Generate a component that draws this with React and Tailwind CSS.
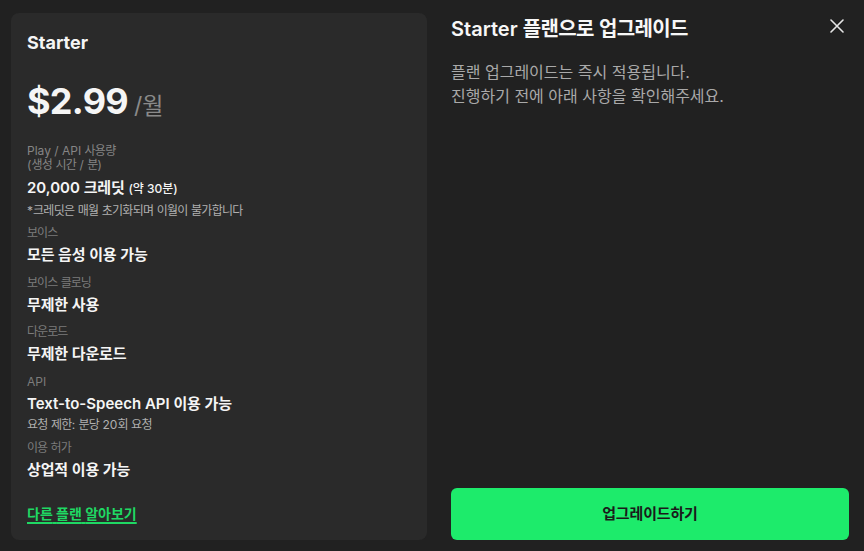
import React from "react";

function K({ children, t = "tracking-[-0.01em]" }) {
  const text = String(children);
  const parts = text.split(/([\uAC00-\uD7A3]+)/);
  return (
    <>
      {parts.map((p, i) =>
        /[\uAC00-\uD7A3]/.test(p) ? (
          <span key={i} className={t}>
            {p}
          </span>
        ) : (
          <React.Fragment key={i}>{p}</React.Fragment>
        )
      )}
    </>
  );
}

function Label({ children, className = "" }) {
  return (
    <div className={"text-[12px] leading-4 text-[#7c7c7c] " + className}>
      <K t="tracking-[-0.08em]">{children}</K>
    </div>
  );
}

function Value({ children, className = "" }) {
  return (
    <div className={"text-[15px] leading-[22px] font-semibold text-[#f5f5f5] " + className}>
      {children}
    </div>
  );
}

export default function App() {
  return (
    <div className="w-[864px] h-[551px] bg-[#212121] flex gap-[24px] pl-[11px] pt-[13px] pb-[11px] pr-[15px] font-['Inter','Noto_Sans_CJK_KR',sans-serif] overflow-hidden">
      <div className="w-[416px] shrink-0 bg-[#2a2a2a] rounded-[8px] px-[16px] pt-[16px] pb-[15px] flex flex-col">
        <div className="text-[18px] leading-[28px] font-bold text-[#f5f5f5]">Starter</div>
        <div className="mt-[24px] flex items-baseline gap-[6px] leading-[40px]">
          <span className="text-[36px] font-bold tracking-[-0.02em] text-[#f5f5f5]">$2.99</span>
          <span className="text-[23px] text-[#8a8a8a]">
            /<K t="tracking-[-0.04em]">월</K>
          </span>
        </div>

        <div className="mt-[18px] text-[12px] leading-[14px] text-[#858585]">
          <div>
            Play / API <K t="tracking-[-0.06em]">사용량</K>
          </div>
          <div>
            (<K t="tracking-[-0.06em]">생성 시간</K> / <K t="tracking-[-0.06em]">분</K>)
          </div>
        </div>
        <Value className="mt-[5px]">
          20,000 <K>크레딧</K>{" "}
          <span className="text-[12px] font-medium">
            (<K>약</K> 30<K>분</K>)
          </span>
        </Value>
        <div className="mt-[3px] text-[12px] leading-4 text-[#b0b0b0]">
          *<K t="tracking-[-0.06em]">크레딧은 매월 초기화되며 이월이 불가합니다</K>
        </div>

        <Label className="mt-[6px]">보이스</Label>
        <Value className="mt-[3px]">
          <K>모든 음성 이용 가능</K>
        </Value>

        <Label className="mt-[9px]">보이스 클로닝</Label>
        <Value className="mt-[3px]">
          <K>무제한 사용</K>
        </Value>

        <Label className="mt-[8px]">다운로드</Label>
        <Value className="mt-[3px]">
          <K>무제한 다운로드</K>
        </Value>

        <Label className="mt-[9px]">API</Label>
        <Value className="mt-[3px]">
          Text-to-Speech API <K>이용 가능</K>
        </Value>
        <div className="mt-[2px] text-[12px] leading-4 text-[#b0b0b0]">
          <K t="tracking-[-0.06em]">요청 제한</K>: <K t="tracking-[-0.06em]">분당</K> 20<K t="tracking-[-0.06em]">회 요청</K>
        </div>

        <Label className="mt-[7px]">이용 허가</Label>
        <Value className="mt-[3px]">
          <K>상업적 이용 가능</K>
        </Value>

        <div className="mt-auto">
          <a className="text-[14px] leading-5 font-bold text-[#1fd863] underline underline-offset-[3px] decoration-[2px]">
            <K t="tracking-normal">다른 플랜 알아보기</K>
          </a>
        </div>
      </div>

      <div className="flex-1 flex flex-col">
        <div className="flex items-start justify-between pt-[2px]">
          <div className="text-[20px] leading-[28px] font-semibold text-[#f7f7f7]">
            Starter <K t="tracking-[-0.03em]">플랜으로 업그레이드</K>
          </div>
          <button className="mt-[-1px] w-[24px] h-[24px] flex items-center justify-center text-[#e6e6e6]">
            <svg width="14" height="14" viewBox="0 0 14 14" fill="none" stroke="currentColor" strokeWidth="1.6" strokeLinecap="round">
              <path d="M1 1L13 13M13 1L1 13" />
            </svg>
          </button>
        </div>
        <div className="mt-[17px] text-[16px] leading-6 text-[#a9a9a9]">
          <div>
            <K t="tracking-normal">플랜 업그레이드는 즉시 적용됩니다</K>.
          </div>
          <div>
            <K t="tracking-normal">진행하기 전에 아래 사항을 확인해주세요</K>.
          </div>
        </div>
        <button className="mt-auto h-[52px] w-full rounded-[6px] bg-[#1deb6b] text-[15px] font-bold text-[#1a1a1a]">
          <K>업그레이드하기</K>
        </button>
      </div>
    </div>
  );
}
